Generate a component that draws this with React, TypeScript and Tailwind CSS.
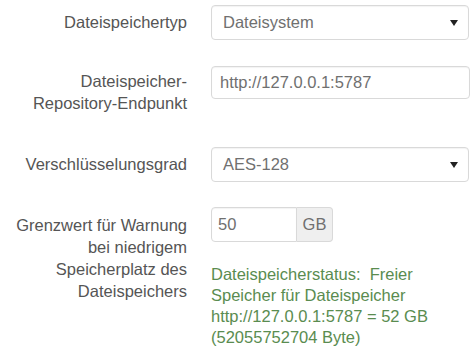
import { ReactNode } from "react";

function Caret() {
  return (
    <svg width="8" height="6" viewBox="0 0 8 6" className="shrink-0">
      <path d="M0 0 L8 0 L4 6 Z" fill="#222" />
    </svg>
  );
}

function SelectBox({ value }: { value: string }) {
  return (
    <div className="flex h-[35px] w-[258px] items-center justify-between rounded-[4px] border border-[#d9d9d9] bg-white pl-[11px] pr-[10px] text-[#707070] shadow-[inset_0_1px_1px_rgba(0,0,0,0.05)]">
      <span>{value}</span>
      <Caret />
    </div>
  );
}

function Row({ label, children, className = "" }: { label: ReactNode; children: ReactNode; className?: string }) {
  return (
    <div className={`flex items-start ${className}`}>
      <div className="w-[187px] shrink-0 text-right leading-[22px] text-[#555]">{label}</div>
      <div className="ml-[24px]">{children}</div>
    </div>
  );
}

export default function App() {
  return (
    <div
      className="h-[348px] w-[473px] overflow-hidden bg-white pt-[5px] text-[16.5px]"
      style={{ fontFamily: '"Liberation Sans", Arial, sans-serif' }}
    >
      <Row label={<div className="pt-[6px]">Dateispeichertyp</div>}>
        <SelectBox value="Dateisystem" />
      </Row>

      <Row className="mt-[26px]" label={<div className="pt-[4px]">Dateispeicher-<br />Repository-Endpunkt</div>}>
        <div className="flex h-[33px] w-[259px] items-center rounded-[4px] border border-[#d9d9d9] bg-white pl-[8px] text-[#707070] shadow-[inset_0_1px_1px_rgba(0,0,0,0.05)]">
          http://127.0.0.1:5787
        </div>
      </Row>

      <Row className="mt-[33px]" label={<div className="pt-[6px]">Verschlüsselungsgrad</div>}>
        <SelectBox value="AES-128" />
      </Row>

      <Row
        className="mt-[25px]"
        label={
          <div className="pt-[7px]">
            Grenzwert für Warnung
            <br />
            bei niedrigem
            <br />
            Speicherplatz des
            <br />
            Dateispeichers
          </div>
        }
      >
        <div className="flex h-[35px] w-[122px]">
          <div className="flex w-[86px] items-center rounded-l-[4px] border border-[#d9d9d9] bg-white pl-[6px] text-[#707070] shadow-[inset_0_1px_1px_rgba(0,0,0,0.05)]">
            50
          </div>
          <div className="flex flex-1 items-center justify-center rounded-r-[4px] border border-l-0 border-[#d9d9d9] bg-[#efefef] text-[#707070]">
            GB
          </div>
        </div>
        <p className="mt-[22px] w-[258px] leading-[21px] text-[#5a8c50]">
          Dateispeicherstatus:&nbsp; Freier Speicher für Dateispeicher http://127.0.0.1:5787 = 52 GB (52055752704 Byte)
        </p>
      </Row>
    </div>
  );
}
